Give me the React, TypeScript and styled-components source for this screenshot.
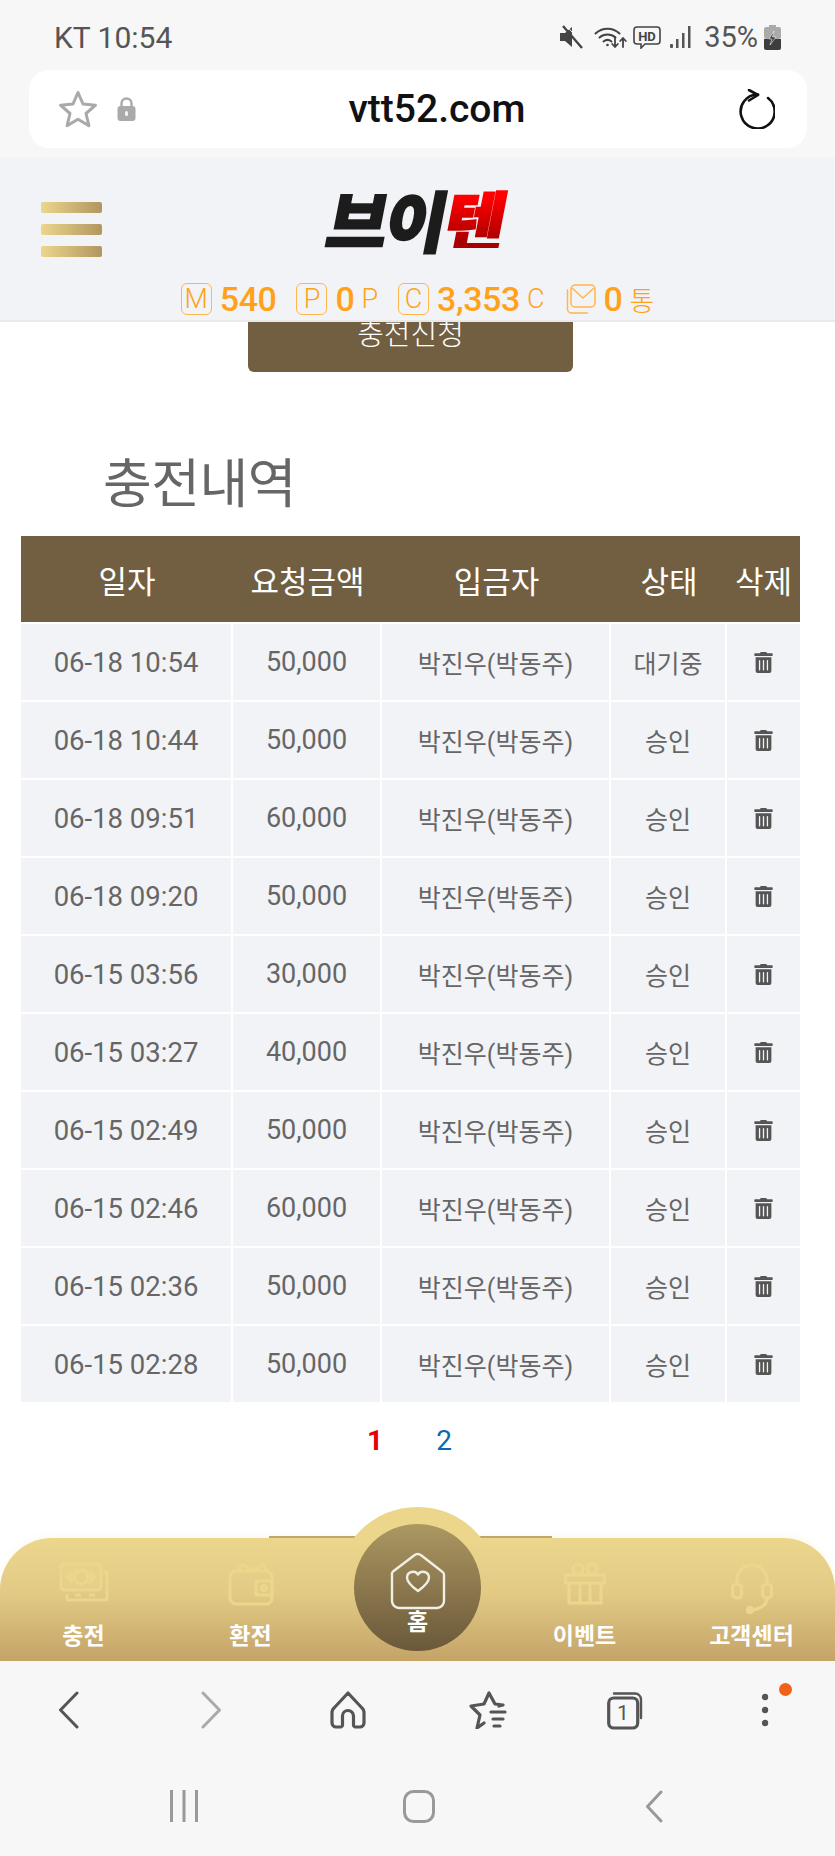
import styled, { createGlobalStyle } from 'styled-components'
import { FaTrashAlt } from 'react-icons/fa'

const SANS = `Roboto, "Noto Sans CJK KR", "Noto Sans", sans-serif`
const GOLD = '#ecd68c'
const BROWN = '#725f41'
const ORANGE = '#ffa21a'

const GlobalStyle = createGlobalStyle`
  html, body {
    margin: 0;
    padding: 0;
    background: #f7f7f7;
  }
  * {
    box-sizing: border-box;
  }
`

const Page = styled.div`
  width: 835px;
  height: 1856px;
  display: flex;
  flex-direction: column;
  overflow: hidden;
  background: #f7f7f7;
  font-family: ${SANS};
`

const StatusBar = styled.div`
  height: 70px;
  flex: none;
  display: flex;
  align-items: center;
  justify-content: space-between;
  padding: 4px 54px 0;
  color: #555;
  font-size: 29px;
`

const Carrier = styled.span`
  font-size: 30px;
`

const StatusIcons = styled.div`
  display: flex;
  align-items: center;

  svg {
    display: block;
  }
`

const StatusGap = styled.span<{ $w: number }>`
  width: ${(p) => p.$w}px;
`

const UrlBar = styled.div`
  height: 78px;
  flex: none;
  margin: 0 28px 9px 29px;
  padding: 0 32px 0 29px;
  background: #fff;
  border-radius: 20px;
  display: flex;
  align-items: center;
  position: relative;
`

const UrlLeft = styled.div`
  display: flex;
  align-items: center;
  gap: 19px;
`

const UrlText = styled.div`
  position: absolute;
  left: 0;
  right: 0;
  padding-left: 38px;
  text-align: center;
  font-size: 39px;
  font-weight: 500;
  color: #111;
  pointer-events: none;
`

const Reload = styled.div`
  margin-left: auto;
  display: flex;
`

const SiteHeader = styled.header`
  height: 165px;
  flex: none;
  position: relative;
  z-index: 2;
  background: #f2f3f6;
  border-bottom: 2px solid #e8e9ea;
`

const LogoRow = styled.div`
  height: 126px;
  padding: 31px 41px 0;
  display: grid;
  grid-template-columns: 1fr auto 1fr;
  align-items: start;
`

const Burger = styled.div`
  width: 61px;
  margin-top: 14px;
  display: flex;
  flex-direction: column;
  gap: 11px;

  span {
    display: block;
    height: 11px;
    border-radius: 2px;
    background: linear-gradient(90deg, ${GOLD}, #b1965f);
  }
`

const Logo = styled.div`
  display: flex;
  height: 60px;
  align-items: center;
  font-family: "Noto Sans CJK KR", sans-serif;
  font-size: 66px;
  font-weight: 900;
  line-height: 60px;
  letter-spacing: -2px;
  color: #1c1c1c;
  -webkit-text-stroke: 2px #1c1c1c;
  transform: skewX(-11deg);
`

const LogoRed = styled.span`
  background: linear-gradient(180deg, #ff0000 15%, #a80000 90%);
  -webkit-background-clip: text;
  background-clip: text;
  color: transparent;
  -webkit-text-stroke: 2px transparent;
`

const Stats = styled.div`
  display: flex;
  justify-content: center;
  align-items: center;
  gap: 20px;
  height: 32px;
  color: ${ORANGE};
`

const Stat = styled.div`
  display: flex;
  align-items: center;
  gap: 8px;
`

const StatBox = styled.span`
  width: 31px;
  height: 32px;
  display: flex;
  align-items: center;
  justify-content: center;
  border: 1.5px solid #ffb64a;
  border-radius: 6px;
  font-size: 27px;
  font-weight: 300;
  line-height: 1;
`

const StatValue = styled.span`
  font-size: 34px;
  font-weight: 500;
  letter-spacing: -0.4px;
`

const StatUnit = styled.span`
  font-size: 27px;
  font-weight: 300;
  margin-left: -1px;
`

const Main = styled.main`
  flex: 1;
  min-height: 0;
  overflow: hidden;
  background: #fff;
`

const ApplyButton = styled.div`
  width: 325px;
  height: 80px;
  margin: -30px auto 0 248px;
  background: ${BROWN};
  border-radius: 6px;
  color: #fff;
  font-size: 29px;
  font-weight: 300;
  display: flex;
  align-items: center;
  justify-content: center;
`

const Title = styled.h2`
  margin: 83px 0 21px 103px;
  font-size: 53px;
  line-height: 60px;
  height: 60px;
  font-weight: 400;
  letter-spacing: -0.5px;
  color: #666;
`

const Table = styled.table`
  width: 779px;
  margin-left: 21px;
  table-layout: fixed;
  border-collapse: separate;
  border-spacing: 0;
`

const HeadCell = styled.th`
  height: 88px;
  padding: 0;
  background: ${BROWN};
  border-bottom: 2px solid #fff;
  color: #fff;
  font-size: 31px;
  font-weight: 400;
  text-align: center;
`

const Cell = styled.td<{ $size?: number }>`
  height: 78px;
  padding: 0;
  background: #f2f3f6;
  border-right: 2px solid #fff;
  border-bottom: 2px solid #fff;
  color: #666;
  font-size: ${(p) => p.$size ?? 25}px;
  text-align: center;

  &:last-child {
    border-right: none;
  }
  svg {
    display: block;
    margin: 0 auto;
    color: #555;
  }
`

const Pager = styled.div`
  margin-top: 18px;
  padding-right: 16px;
  height: 38px;
  display: flex;
  justify-content: center;
  gap: 53px;
  font-size: 28px;
  line-height: 38px;
`

const PageNo = styled.span<{ $active?: boolean }>`
  color: ${(p) => (p.$active ? '#e60000' : '#0a67b0')};
  font-weight: ${(p) => (p.$active ? 700 : 400)};
`

const NavWrap = styled.nav`
  height: 123px;
  flex: none;
  position: relative;
  z-index: 3;
  background: #fff;
`

const Shelf = styled.div`
  position: absolute;
  left: 269px;
  top: -2px;
  width: 283px;
  height: 3px;
  background: #b9a268;
`

const Dome = styled.div`
  position: absolute;
  left: 337px;
  top: -31px;
  width: 161px;
  height: 80px;
  border-radius: 81px 81px 0 0;
  background: ${GOLD};
`

const NavBar = styled.div`
  position: relative;
  height: 100%;
  display: grid;
  grid-template-columns: repeat(5, 167px);
  border-radius: 52px 52px 0 0;
  background: linear-gradient(180deg, ${GOLD} 0%, #e2ca85 45%, #c4a367 100%);
  box-shadow: 0 -2px 6px rgba(236, 214, 140, 0.18);
`

const NavItem = styled.div`
  display: flex;
  flex-direction: column;
  align-items: center;
  padding-top: 24px;
`

const NavIcon = styled.div`
  height: 54px;
  display: flex;
  align-items: flex-start;
  justify-content: center;
  color: ${GOLD};
`

const NavLabel = styled.span`
  margin-top: 2px;
  font-family: "Noto Sans CJK KR", sans-serif;
  font-size: 23px;
  line-height: 32px;
  font-weight: 700;
  color: #fff;
`

const HomeButton = styled.div`
  position: absolute;
  left: 354px;
  top: -14px;
  width: 127px;
  height: 127px;
  border-radius: 50%;
  background: linear-gradient(180deg, #ac9861, #6a583a);
  display: flex;
  flex-direction: column;
  align-items: center;
  padding-top: 28px;

  ${NavLabel} {
    margin-top: -3px;
    line-height: 26px;
  }
`

const Toolbar = styled.div`
  height: 98px;
  flex: none;
  display: grid;
  grid-template-columns: repeat(6, 139px);
  align-items: center;
  justify-items: center;
  background: #f7f7f7;
  position: relative;
`

const ToolSlot = styled.div<{ $shift?: number }>`
  display: flex;
  position: relative;
  margin-left: ${(p) => p.$shift ?? 0}px;
`

const Badge = styled.span`
  position: absolute;
  left: 18px;
  top: -10px;
  width: 13px;
  height: 13px;
  border-radius: 50%;
  background: #f0611a;
`

const SystemNav = styled.div`
  height: 97px;
  flex: none;
  display: grid;
  grid-template-columns: repeat(3, 235px);
  justify-content: center;
  align-items: center;
  justify-items: center;
  padding: 0 0 3px 3px;
`

const rows = [
  ['06-18 10:54', '50,000', '대기중'],
  ['06-18 10:44', '50,000', '승인'],
  ['06-18 09:51', '60,000', '승인'],
  ['06-18 09:20', '50,000', '승인'],
  ['06-15 03:56', '30,000', '승인'],
  ['06-15 03:27', '40,000', '승인'],
  ['06-15 02:49', '50,000', '승인'],
  ['06-15 02:46', '60,000', '승인'],
  ['06-15 02:36', '50,000', '승인'],
  ['06-15 02:28', '50,000', '승인'],
]

const MuteIcon = () => (
  <svg width="23" height="24" viewBox="0 0 23 24" fill="#444">
    <path d="M0 8h5l7-6v20l-7-6H0z" />
    <path d="M3 1l19 22" stroke="#444" strokeWidth="2.4" />
    <path d="M3 1l19 22" stroke="#f7f7f7" strokeWidth="1" transform="translate(2.4 -1.6)" />
  </svg>
)

const WifiIcon = () => (
  <svg width="33" height="24" viewBox="0 0 33 24" fill="none" stroke="#444" strokeWidth="2" strokeLinecap="round">
    <path d="M1.500 8.500C8 2 19 2 25.500 8.500" />
    <path d="M5.500 12.500c4.500-4 11.500-4 16 0" />
    <path d="M9.500 16.500c2.500-2 5.500-2 8 0" />
    <circle cx="13.500" cy="20" r="1.300" fill="#444" stroke="none" />
    <path d="M21 12v10m-2.800-3 2.800 3 2.800-3M29 22V13m-2.800 3 2.800-3 2.800 3" strokeWidth="1.800" />
  </svg>
)

const HdIcon = () => (
  <svg width="28" height="23" viewBox="0 0 28 23">
    <path d="M4 1h20a3 3 0 0 1 3 3v11a3 3 0 0 1-3 3H12l-4 4v-4H4a3 3 0 0 1-3-3V4a3 3 0 0 1 3-3z" fill="none" stroke="#444" strokeWidth="1.600" />
    <text x="14" y="14.500" textAnchor="middle" fontSize="13" fontWeight="700" fontFamily="Roboto, sans-serif" fill="#444">HD</text>
  </svg>
)

const SignalIcon = () => (
  <svg width="22" height="22" viewBox="0 0 22 22" fill="#555">
    <rect x="0" y="18" width="3" height="4" rx="1" />
    <rect x="6" y="13" width="2.500" height="9" />
    <rect x="12" y="7" width="2.500" height="15" />
    <rect x="18" y="0" width="2.500" height="22" />
  </svg>
)

const BatteryIcon = () => (
  <svg width="17" height="25" viewBox="0 0 17 25">
    <rect x="5" y="0" width="7" height="3" fill="#aaa" />
    <rect x="0" y="2" width="17" height="12" rx="2" fill="#aaa" />
    <path d="M0 14h17v9a2 2 0 0 1-2 2H2a2 2 0 0 1-2-2z" fill="#3d3d3d" />
    <path d="M10 6l-5 8h3l-2 6 6-8H8.500z" fill="#3d3d3d" stroke="#f7f7f7" strokeWidth="0.600" />
  </svg>
)

const StarOutline = () => (
  <svg width="40" height="38" viewBox="0 0 40 38" fill="none" stroke="#a9a9a9" strokeWidth="3" strokeLinejoin="round">
    <path d="M20 2.500l5 11.500 12.500 1.200-9.500 8.300 2.900 12.200L20 29.200 9.100 35.700 12 23.500 2.500 15.200 15 14z" />
  </svg>
)

const LockIcon = () => (
  <svg width="19" height="25" viewBox="0 0 19 25">
    <path d="M4.500 11V6.500a5 5 0 0 1 10 0V11" fill="none" stroke="#aaa" strokeWidth="2.400" />
    <rect x="0.500" y="9" width="18" height="15" rx="3" fill="#aaa" />
    <rect x="8" y="14" width="3" height="5" rx="1.500" fill="#f3f3f3" />
  </svg>
)

const ReloadIcon = () => (
  <svg width="36" height="40" viewBox="0 0 36 40" fill="none" stroke="#111" strokeWidth="2.600" strokeLinecap="round" strokeLinejoin="round">
    <path d="M19 5.500A17 17 0 1 0 29 9" />
    <path d="M10 1l9 5-9 5.500" />
  </svg>
)

const MailIcon = () => (
  <svg width="31" height="32" viewBox="0 0 31 32" fill="none" stroke="#ffb64a" strokeWidth="1.500" strokeLinejoin="round">
    <rect x="6" y="2" width="24" height="22" rx="4" />
    <path d="M7 5l11 10L29 5" />
    <path d="M2.500 7v19a4 4 0 0 0 4 4h16" strokeLinecap="round" />
  </svg>
)

const MoneyIcon = () => (
  <svg width="50" height="40" viewBox="0 0 50 40" fill="none" stroke="currentColor" strokeWidth="3">
    <rect x="2" y="2" width="40" height="26" rx="3" fill="currentColor" fillOpacity="0.35" />
    <circle cx="22" cy="15" r="7" />
    <path d="M8 15l4-4v8zM36 15l-4-4v8z" fill="currentColor" />
    <path d="M44 10h2a2 2 0 0 1 2 2v24a2 2 0 0 1-2 2H10a2 2 0 0 1-2-2v-4" />
    <path d="M16 33h6M30 33h6" strokeWidth="3" />
  </svg>
)

const WalletIcon = () => (
  <svg width="46" height="44" viewBox="0 0 46 44" fill="none" stroke="currentColor" strokeWidth="3.200" strokeLinejoin="round">
    <rect x="2" y="9" width="42" height="33" rx="6" />
    <path d="M9 9l6-7 6 5 8 0 6-5 4 7" strokeWidth="2.800" />
    <rect x="28" y="19" width="16" height="14" rx="1" />
    <circle cx="36" cy="26" r="2.500" />
  </svg>
)

const GiftIcon = () => (
  <svg width="42" height="43" viewBox="0 0 42 43" fill="none" stroke="currentColor" strokeWidth="3.200">
    <circle cx="14" cy="7" r="5" />
    <circle cx="28" cy="7" r="5" />
    <rect x="1.500" y="13" width="39" height="8" />
    <path d="M5 21v20h32V21M16 21v20M26 21v20" />
  </svg>
)

const HeadsetIcon = () => (
  <svg width="42" height="52" viewBox="0 0 42 52" fill="none" stroke="currentColor" strokeWidth="3.200" strokeLinecap="round">
    <path d="M6 22v-4a15 15 0 0 1 30 0v4" />
    <rect x="1.500" y="22" width="9" height="14" rx="4" />
    <rect x="31.500" y="22" width="9" height="14" rx="4" />
    <path d="M36 36c0 6-5 10-14 12" />
    <circle cx="19" cy="48" r="2.600" fill="currentColor" />
  </svg>
)

const HouseHeart = () => (
  <svg width="58" height="58" viewBox="0 0 58 58" fill="none" stroke="#f1eee6" strokeWidth="2.400" strokeLinejoin="round">
    <path d="M4 19.500L25 3.500a6 6 0 0 1 7.400 0L53 19.500a4 4 0 0 1 2 3.500v26a7 7 0 0 1-7 7H10a7 7 0 0 1-7-7V23a4 4 0 0 1 1-3.500z" />
    <path d="M29 39c-7-5-11-9-11-13.500a6 6 0 0 1 11-3 6 6 0 0 1 11 3C40 30 36 34 29 39z" />
  </svg>
)

const ChevronLeft = ({ color }: { color: string }) => (
  <svg width="21" height="38" viewBox="0 0 21 38" fill="none" stroke={color} strokeWidth="3" strokeLinecap="round" strokeLinejoin="round">
    <path d="M19 2L2.500 19 19 36" />
  </svg>
)

const ChevronRight = () => (
  <svg width="21" height="38" viewBox="0 0 21 38" fill="none" stroke="#aaa" strokeWidth="3" strokeLinecap="round" strokeLinejoin="round">
    <path d="M2 2l16.500 17L2 36" />
  </svg>
)

const BackGesture = () => (
  <svg width="18" height="33" viewBox="0 0 18 33" fill="none" stroke="#999" strokeWidth="3" strokeLinecap="round" strokeLinejoin="round">
    <path d="M16 2L2.500 16.500 16 31" />
  </svg>
)

const HomeTool = () => (
  <svg width="36" height="38" viewBox="0 0 36 38" fill="none" stroke="#555" strokeWidth="3.200" strokeLinejoin="round">
    <path d="M18 2L4 17a6 6 0 0 0-2 4v11a4 4 0 0 0 4 4h5a2 2 0 0 0 1.500-2v-9a5.500 5.500 0 0 1 11 0v9a2 2 0 0 0 1.500 2h5a4 4 0 0 0 4-4V21a6 6 0 0 0-2-4z" />
  </svg>
)

const StarList = () => (
  <svg width="40" height="38" viewBox="0 0 40 38" fill="none" stroke="#555" strokeWidth="3.200" strokeLinecap="round" strokeLinejoin="round">
    <path d="M32 15l4-1-8-1-6-11-5 11-13 2 9 9-3 13 7-5" />
    <path d="M24 21h14M26 28h10M27 35h6" />
  </svg>
)

const TabsIcon = () => (
  <svg width="38" height="39" viewBox="0 0 38 39">
    <path d="M7 2.500h21a6 6 0 0 1 6 6V27" fill="none" stroke="#555" strokeWidth="2.400" strokeLinecap="round" />
    <rect x="1.700" y="7" width="29" height="30" rx="5" fill="none" stroke="#555" strokeWidth="3.200" />
    <text x="16" y="29" textAnchor="middle" fontSize="21" fontFamily="Roboto, sans-serif" fill="#555">1</text>
  </svg>
)

const DotsIcon = () => (
  <svg width="8" height="34" viewBox="0 0 8 34" fill="#555">
    <circle cx="4" cy="4" r="3.200" />
    <circle cx="4" cy="17" r="3.200" />
    <circle cx="4" cy="30" r="3.200" />
  </svg>
)

const RecentsIcon = () => (
  <svg width="30" height="32" viewBox="0 0 30 32" fill="#999">
    <rect x="1" y="0" width="3" height="32" />
    <rect x="13.500" y="0" width="3" height="32" />
    <rect x="26" y="0" width="3" height="32" />
  </svg>
)

const SquareIcon = () => (
  <svg width="32" height="33" viewBox="0 0 32 33" fill="none" stroke="#999" strokeWidth="3">
    <rect x="1.500" y="1.500" width="29" height="30" rx="9" />
  </svg>
)

const App = () => {
  return (
    <Page>
      <GlobalStyle />
      <StatusBar>
        <Carrier>KT 10:54</Carrier>
        <StatusIcons>
          <MuteIcon />
          <StatusGap $w={11} />
          <WifiIcon />
          <StatusGap $w={6} />
          <HdIcon />
          <StatusGap $w={9} />
          <SignalIcon />
          <StatusGap $w={12} />
          <span>35%</span>
          <StatusGap $w={6} />
          <BatteryIcon />
        </StatusIcons>
      </StatusBar>

      <UrlBar>
        <UrlLeft>
          <StarOutline />
          <LockIcon />
        </UrlLeft>
        <UrlText>vtt52.com</UrlText>
        <Reload>
          <ReloadIcon />
        </Reload>
      </UrlBar>

      <SiteHeader>
        <LogoRow>
          <Burger>
            <span />
            <span />
            <span />
          </Burger>
          <Logo>
            브이<LogoRed>텐</LogoRed>
          </Logo>
        </LogoRow>
        <Stats>
          <Stat>
            <StatBox>M</StatBox>
            <StatValue>540</StatValue>
          </Stat>
          <Stat>
            <StatBox>P</StatBox>
            <StatValue>0</StatValue>
            <StatUnit>P</StatUnit>
          </Stat>
          <Stat>
            <StatBox>C</StatBox>
            <StatValue>3,353</StatValue>
            <StatUnit>C</StatUnit>
          </Stat>
          <Stat>
            <MailIcon />
            <StatValue>0</StatValue>
            <StatUnit>통</StatUnit>
          </Stat>
        </Stats>
      </SiteHeader>

      <Main>
        <ApplyButton>충전신청</ApplyButton>
        <Title>충전내역</Title>
        <Table>
          <colgroup>
            <col width="212" />
            <col width="149" />
            <col width="229" />
            <col width="116" />
            <col width="73" />
          </colgroup>
          <thead>
            <tr>
              <HeadCell>일자</HeadCell>
              <HeadCell>요청금액</HeadCell>
              <HeadCell>입금자</HeadCell>
              <HeadCell>상태</HeadCell>
              <HeadCell>삭제</HeadCell>
            </tr>
          </thead>
          <tbody>
            {rows.map(([date, amount, status]) => (
              <tr key={date}>
                <Cell $size={27.5}>{date}</Cell>
                <Cell $size={27}>{amount}</Cell>
                <Cell>박진우(박동주)</Cell>
                <Cell>{status}</Cell>
                <Cell>
                  <FaTrashAlt size={21} />
                </Cell>
              </tr>
            ))}
          </tbody>
        </Table>
        <Pager>
          <PageNo $active>1</PageNo>
          <PageNo>2</PageNo>
        </Pager>
      </Main>

      <NavWrap>
        <Shelf />
        <Dome />
        <NavBar>
          <NavItem>
            <NavIcon>
              <MoneyIcon />
            </NavIcon>
            <NavLabel>충전</NavLabel>
          </NavItem>
          <NavItem>
            <NavIcon>
              <WalletIcon />
            </NavIcon>
            <NavLabel>환전</NavLabel>
          </NavItem>
          <div />
          <NavItem>
            <NavIcon>
              <GiftIcon />
            </NavIcon>
            <NavLabel>이벤트</NavLabel>
          </NavItem>
          <NavItem>
            <NavIcon>
              <HeadsetIcon />
            </NavIcon>
            <NavLabel>고객센터</NavLabel>
          </NavItem>
        </NavBar>
        <HomeButton>
          <HouseHeart />
          <NavLabel>홈</NavLabel>
        </HomeButton>
      </NavWrap>

      <Toolbar>
        <ToolSlot $shift={-3}>
          <ChevronLeft color="#555" />
        </ToolSlot>
        <ToolSlot $shift={6}>
          <ChevronRight />
        </ToolSlot>
        <ToolSlot>
          <HomeTool />
        </ToolSlot>
        <ToolSlot>
          <StarList />
        </ToolSlot>
        <ToolSlot>
          <TabsIcon />
        </ToolSlot>
        <ToolSlot>
          <DotsIcon />
          <Badge />
        </ToolSlot>
      </Toolbar>

      <SystemNav>
        <RecentsIcon />
        <SquareIcon />
        <BackGesture />
      </SystemNav>
    </Page>
  )
}

export default App
